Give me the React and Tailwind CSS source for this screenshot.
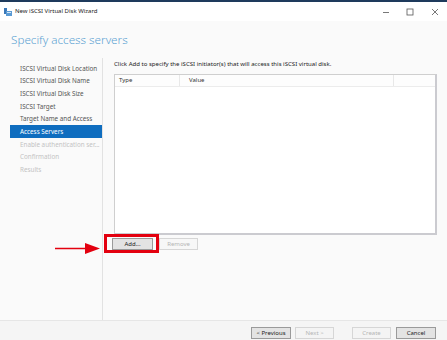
import React from "react";

const F = { fontFamily: '"Noto Sans", "Open Sans", sans-serif' };

function Btn({ children, disabled, className = "" }) {
  return (
    <div
      className={
        "h-[12px] flex items-center justify-center text-[6px] border " +
        (disabled
          ? "border-[#d6d6d6] bg-[#f4f4f4] text-[#b4b4b4] "
          : "border-[#9a9a9a] bg-[#e3e3e3] text-[#222] ") +
        className
      }
    >
      {children}
    </div>
  );
}

export default function App() {
  const items = [
    ["ISCSI Virtual Disk Location", "n"],
    ["ISCSI Virtual Disk Name", "n"],
    ["ISCSI Virtual Disk Size", "n"],
    ["ISCSI Target", "n"],
    ["Target Name and Access", "n"],
    ["Access Servers", "s"],
    ["Enable authentication ser...", "d"],
    ["Confirmation", "d"],
    ["Results", "d"],
  ];
  return (
    <div style={F} className="relative w-[447px] h-[340px] flex flex-col bg-[#fafafa] overflow-hidden">
      <div className="h-[2px] bg-[#1e3a5c]" />
      <div className="h-[19px] bg-white flex items-center">
        <svg className="ml-[4px]" width="8" height="8" viewBox="0 0 8 8">
          <rect x="0" y="0" width="3" height="6" fill="#3a78b8" />
          <rect x="2" y="3" width="6" height="5" fill="#5a9ad4" />
          <rect x="3" y="4" width="4" height="1" fill="#cfe3f5" />
        </svg>
        <span className="ml-[3px] text-[6px] text-[#222]">New iSCSI Virtual Disk Wizard</span>
        <div className="ml-auto flex items-center text-[#444]">
          <svg width="8" height="8" viewBox="0 0 8 8" className="mr-[16px]">
            <line x1="1" y1="4.5" x2="7" y2="4.5" stroke="#555" strokeWidth="0.8" />
          </svg>
          <svg width="8" height="8" viewBox="0 0 8 8" className="mr-[17px]">
            <rect x="1" y="1" width="6" height="6" fill="none" stroke="#555" strokeWidth="0.8" />
          </svg>
          <svg width="8" height="8" viewBox="0 0 8 8" className="mr-[8px]">
            <path d="M1 1 L7 7 M7 1 L1 7" stroke="#555" strokeWidth="0.8" />
          </svg>
        </div>
      </div>
      <div className="h-[37px] flex items-center pl-[11px]">
        <span className="text-[11.7px] font-light text-[#5aa2d2] leading-none">Specify access servers</span>
      </div>
      <div className="flex-1 flex">
        <div className="w-[103px] border-r border-[#e2e2e2] pt-[4px] pl-[10px]">
          {items.map(([t, k]) => (
            <div
              key={t}
              className={
                "h-[12.7px] flex items-center pl-[10px] text-[6.3px] whitespace-nowrap " +
                (k === "s"
                  ? "bg-[#0f6dbf] text-white"
                  : k === "d"
                  ? "text-[#c3c3c3]"
                  : "text-[#555]")
              }
            >
              {t}
            </div>
          ))}
        </div>
        <div className="flex-1 pl-[11px] pr-[10px] pt-[3px]">
          <div className="h-[8px] flex items-center text-[6.05px] text-[#222] whitespace-nowrap">
            Click Add to specify the iSCSI initiator(s) that will access this iSCSI virtual disk.
          </div>
          <div className="mt-[5px] h-[161px] bg-white border border-[#cfcfcf] border-r-[2px] border-b-[2px] border-r-[#cbcbd0] border-b-[#cbcbd0] flex flex-col">
            <div className="h-[12px] flex text-[6px] text-[#333] bg-[#fdfdfd] border-b border-[#ececec]">
              <div className="w-[65px] pl-[4px] flex items-center border-r border-[#e8e8e8]">Type</div>
              <div className="w-[214px] pl-[9px] flex items-center border-r border-[#e8e8e8]">Value</div>
              <div className="flex-1" />
            </div>
          </div>
          <div className="mt-[3px] flex gap-[6px] relative">
            <div className="relative">
              <Btn className="w-[41px] -ml-[2px]">Add...</Btn>
              <div className="absolute left-[-10px] top-[-4px] w-[55px] h-[19px] border-[3px] border-[#e3000f]" />
            </div>
            <Btn disabled className="w-[39px] bg-[#f7f7f7]">Remove</Btn>
          </div>
        </div>
      </div>
      <div className="h-[20px] border-t border-[#e6e6e6] bg-[#f5f5f5] flex items-start pt-[6px]">
        <div className="ml-[251px] flex">
          <Btn className="w-[40px]">&lt; Previous</Btn>
          <Btn disabled className="w-[39px] ml-[4px]">Next &gt;</Btn>
          <Btn disabled className="w-[39px] ml-[18px]">Create</Btn>
          <Btn className="w-[40px] ml-[5px]">Cancel</Btn>
        </div>
      </div>
      <svg className="absolute left-[54px] top-[242px]" width="48" height="13" viewBox="0 0 48 13">
        <line x1="1" y1="6.5" x2="34" y2="6.5" stroke="#e3000f" strokeWidth="1.6" />
        <path d="M31 1 L46 6.5 L31 12 Z" fill="#e3000f" />
      </svg>
    </div>
  );
}
